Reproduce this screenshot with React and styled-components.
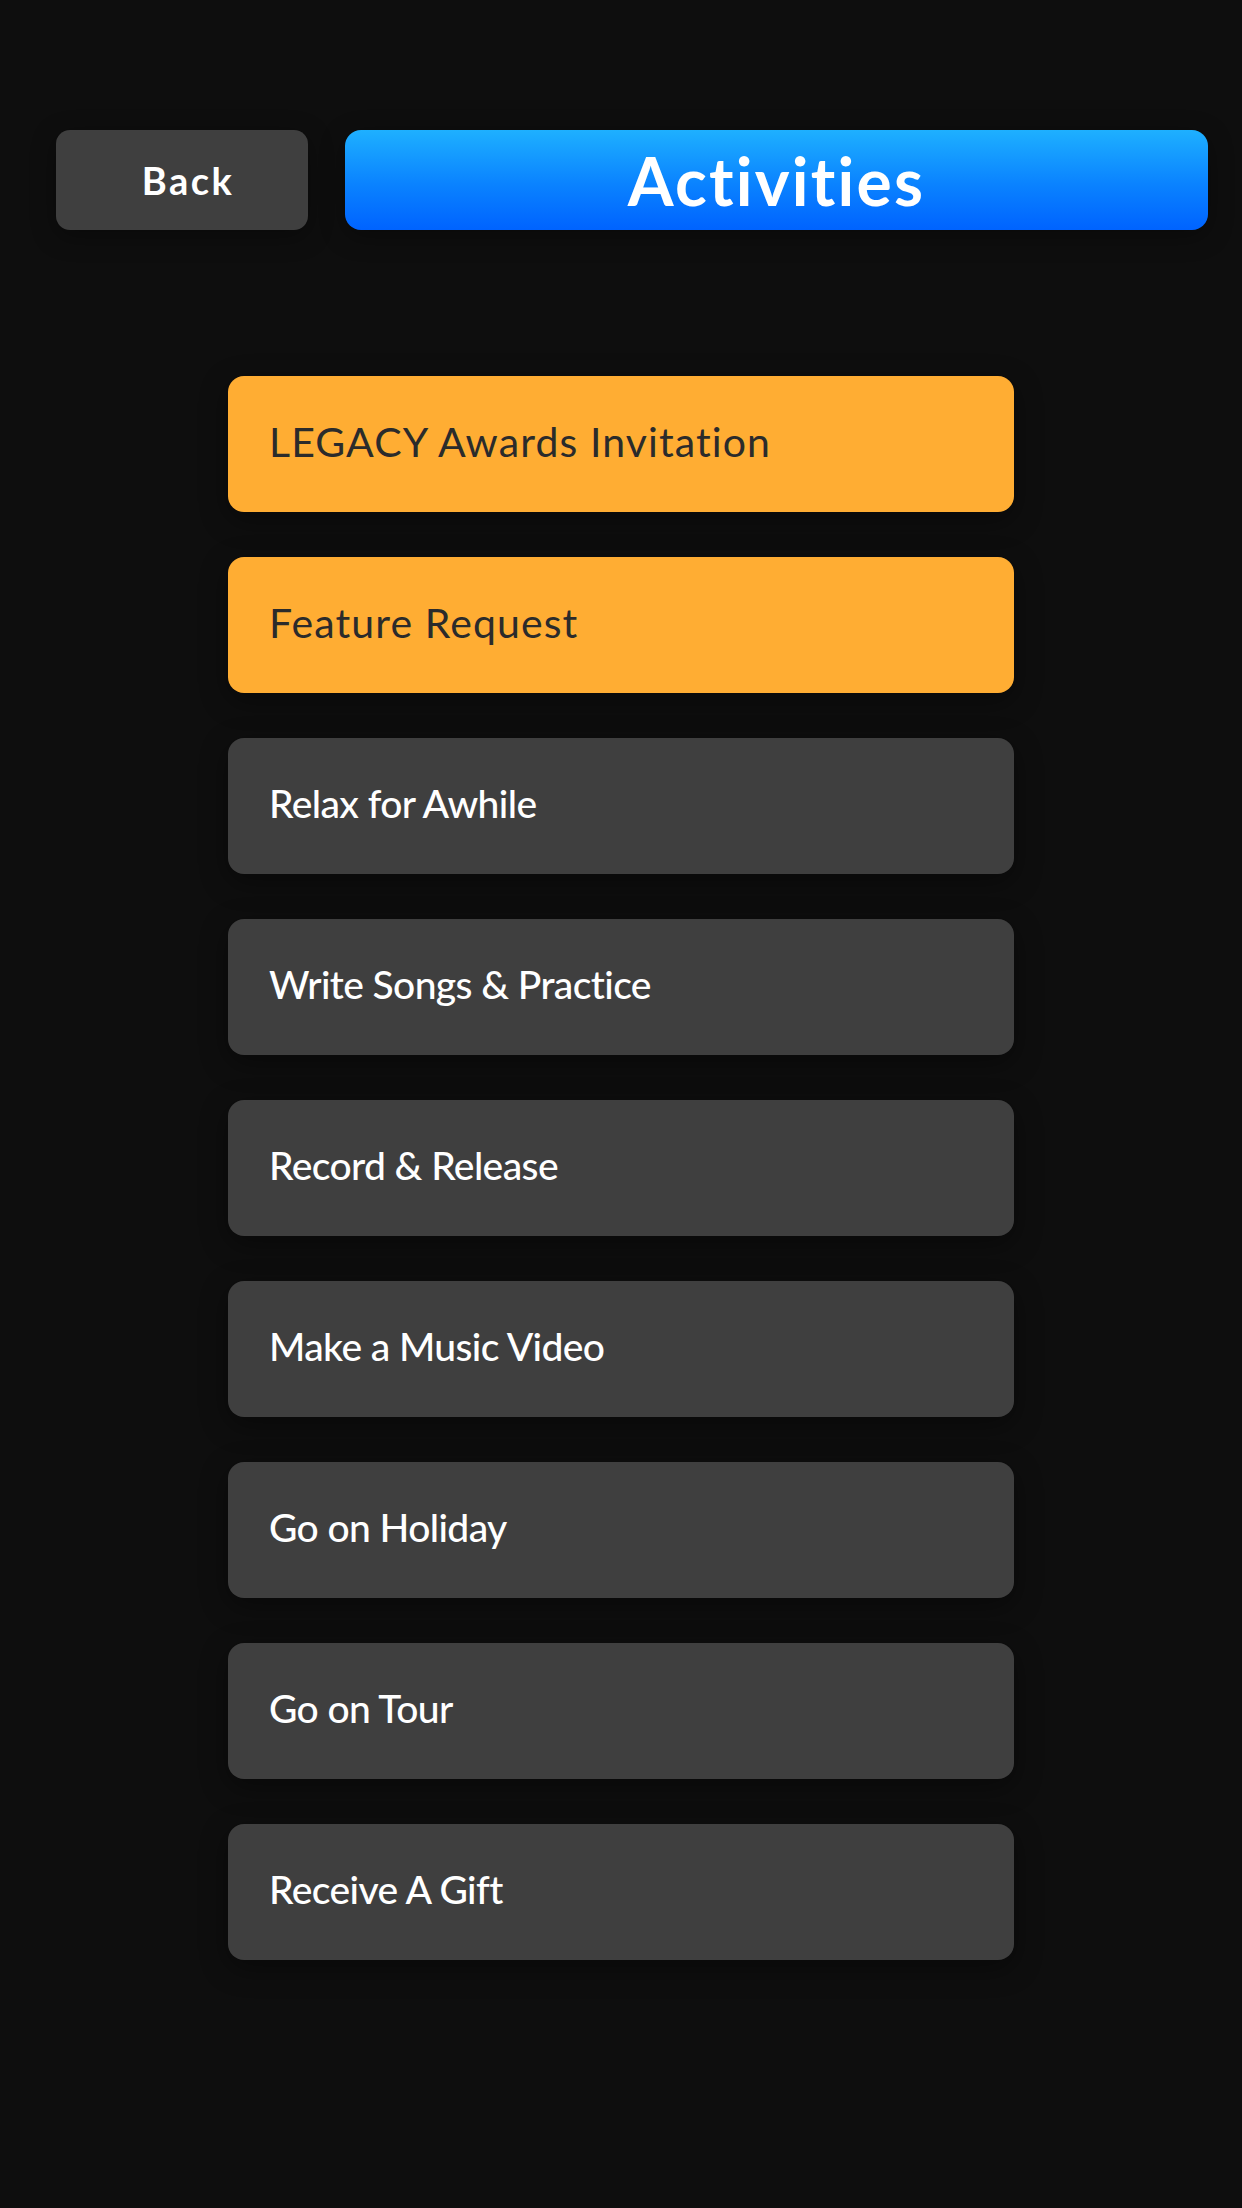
import React from 'react';
import styled, { createGlobalStyle } from 'styled-components';

// Activity list data
const activities = [
  { id: 1, label: 'LEGACY Awards Invitation', highlight: true },
  { id: 2, label: 'Feature Request', highlight: true },
  { id: 3, label: 'Relax for Awhile', highlight: false },
  { id: 4, label: 'Write Songs & Practice', highlight: false },
  { id: 5, label: 'Record & Release', highlight: false },
  { id: 6, label: 'Make a Music Video', highlight: false },
  { id: 7, label: 'Go on Holiday', highlight: false },
  { id: 8, label: 'Go on Tour', highlight: false },
  { id: 9, label: 'Receive A Gift', highlight: false },
];

const GlobalStyle = createGlobalStyle`
  html, body {
    margin: 0;
    padding: 0;
    background-color: #0e0e0e;
    font-family: Lato, "Noto Sans", sans-serif;
  }
`;

const App = () => {
  return (
    <>
      <GlobalStyle />
      <Screen>
        <Header>
          <BackButton>Back</BackButton>
          <Title>Activities</Title>
        </Header>

        <ActivityList>
          {activities.map((item) => (
            <ActivityItem key={item.id} highlight={item.highlight}>
              {item.label}
            </ActivityItem>
          ))}
        </ActivityList>
      </Screen>
    </>
  );
};

const Screen = styled.div`
  min-height: 2208px;
  background-color: #0e0e0e;
  padding: 130px 34px 0 56px;
  box-sizing: border-box;
`;

const Header = styled.div`
  display: flex;
  align-items: stretch;
  gap: 37px;
  height: 100px;
`;

const BackButton = styled.button`
  width: 252px;
  flex-shrink: 0;
  border: none;
  border-radius: 14px;
  padding: 0 0 0 12px;
  background-color: #3f3f3f;
  color: #ffffff;
  font-family: Lato, sans-serif;
  font-size: 38px;
  font-weight: 700;
  letter-spacing: 2.5px;
  cursor: pointer;
  box-shadow: 0 6px 24px rgba(0, 0, 0, 0.35);
`;

const Title = styled.h1`
  flex: 1;
  margin: 0;
  display: flex;
  align-items: center;
  justify-content: center;
  border-radius: 16px;
  background: linear-gradient(180deg, #1eb0ff 0%, #0a82ff 55%, #0063ff 100%);
  color: #ffffff;
  font-family: Lato, sans-serif;
  font-size: 66px;
  font-weight: 700;
  letter-spacing: 2.2px;
  box-shadow: 0 6px 24px rgba(0, 0, 0, 0.35);
`;

const ActivityList = styled.div`
  margin: 146px auto 0;
  width: 786px;
  transform: translateX(-11px);
  display: flex;
  flex-direction: column;
  gap: 45px;
`;

const ActivityItem = styled.div`
  height: 136px;
  box-sizing: border-box;
  display: flex;
  align-items: center;
  padding: 0 0 6px 41px;
  border-radius: 16px;
  background-color: ${(props) => (props.highlight ? '#ffad33' : '#3f3f3f')};
  color: ${(props) => (props.highlight ? '#2b2b2b' : '#ffffff')};
  font-size: ${(props) => (props.highlight ? '41px' : '39px')};
  font-weight: ${(props) => (props.highlight ? 400 : 500)};
  letter-spacing: ${(props) => (props.highlight ? '1.1px' : '-0.6px')};
  box-shadow: 0 8px 28px rgba(0, 0, 0, 0.4);
`;

export default App;
